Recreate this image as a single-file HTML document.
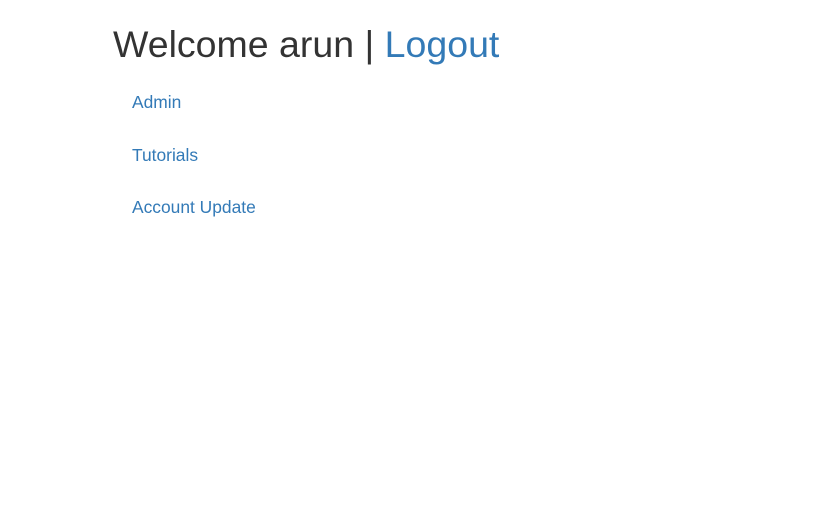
<!DOCTYPE html>
<html><head><meta charset="utf-8"><style>
body{margin:0;background:#fff;font-family:"Liberation Sans",Arial,sans-serif;}
h1{position:absolute;left:113px;top:23px;margin:0;font-size:37.5px;font-weight:400;line-height:42px;color:#333;}
a{color:#337ab7;text-decoration:none;}
.l{position:absolute;left:132px;font-size:17.4px;line-height:20px;}
</style></head><body>
<h1>Welcome arun | <a>Logout</a></h1>
<a class="l" style="top:92px">Admin</a>
<a class="l" style="top:145px">Tutorials</a>
<a class="l" style="top:197px">Account Update</a>
</body></html>
